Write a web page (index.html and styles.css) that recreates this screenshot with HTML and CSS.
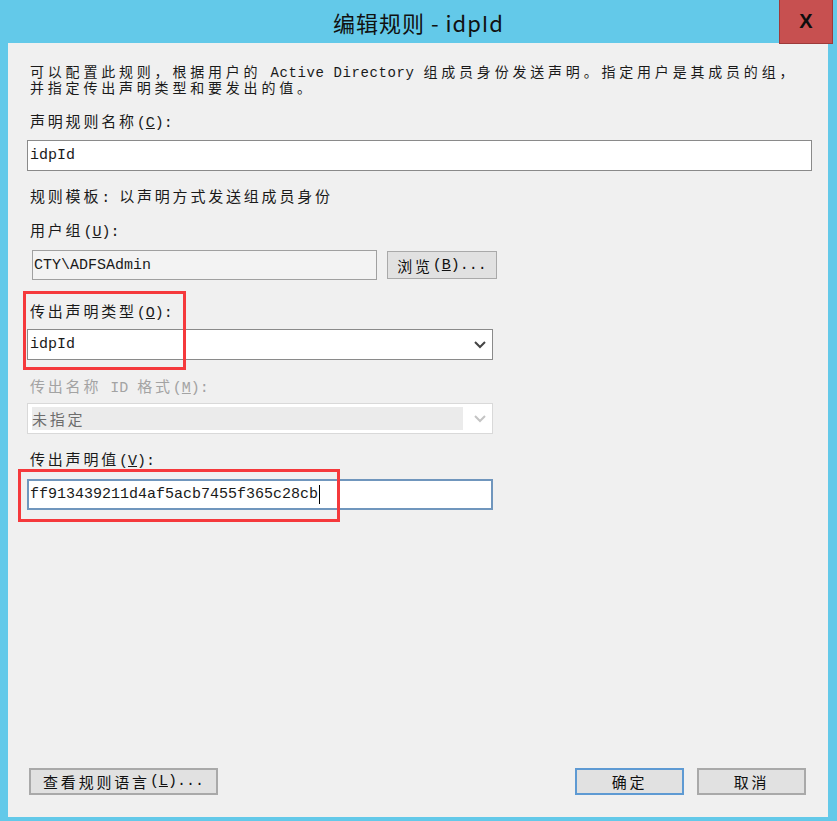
FILE: index.html
```html
<!DOCTYPE html>
<html lang="zh-CN">
<head>
  <meta charset="UTF-8">
  <meta name="viewport" content="width=device-width, initial-scale=1.0">
  <title>编辑规则 - idpId</title>
  <link rel="stylesheet" href="styles.css">
</head>
<body>

<div class="window">
  <div class="titlebar">
    <div class="title">编辑规则 - idpId</div>
    <div class="close">X</div>
  </div>

  <div class="client">
    <p class="intro">可以配置此规则，根据用户的<span class="en"> Active Directory </span>组成员身份发送声明。指定用户是其成员的组，<br>并指定传出声明类型和要发出的值。</p>

    <div class="label label-first">声明规则名称<span class="en">(<u>C</u>):</span></div>
    <div class="textbox wide"><span class="en">idpId</span></div>

    <div class="label label-template">规则模板<span class="en">: </span>以声明方式发送组成员身份</div>

    <div class="label label-group">用户组<span class="en">(<u>U</u>):</span></div>
    <div class="row">
      <div class="textbox readonly"><span class="en">CTY\ADFSAdmin</span></div>
      <div class="button browse">浏览<span class="en">(<u>B</u>)...</span></div>
    </div>

    <div class="marked marked-type">
      <div class="label">传出声明类型<span class="en">(<u>O</u>):</span></div>
      <div class="select">
        <span class="en">idpId</span>
        <svg class="chevron" width="12" height="8" viewBox="0 0 12 8"><polyline points="1,1 6,6 11,1" fill="none" stroke="#444" stroke-width="2"/></svg>
      </div>
      <div class="redbox"></div>
    </div>

    <div class="label label-disabled">传出名称<span class="en"> ID </span>格式<span class="en">(<u>M</u>):</span></div>
    <div class="select disabled">
      <span class="select-value">未指定</span>
      <svg class="chevron" width="12" height="8" viewBox="0 0 12 8"><polyline points="1,1 6,6 11,1" fill="none" stroke="#c4c4c4" stroke-width="2"/></svg>
    </div>

    <div class="marked marked-value">
      <div class="label">传出声明值<span class="en">(<u>V</u>):</span></div>
      <div class="textbox focused"><span class="en">ff913439211d4af5acb7455f365c28cb</span><span class="caret"></span></div>
      <div class="redbox"></div>
    </div>

    <div class="footer">
      <div class="button rules">查看规则语言<span class="en">(<u>L</u>)...</span></div>
      <div class="footer-right">
        <div class="button default">确定</div>
        <div class="button">取消</div>
      </div>
    </div>
  </div>
</div>

</body>
</html>
```

FILE: styles.css
```css
/* Basic reset */
*, *::before, *::after {
  box-sizing: border-box;
}

html, body {
  margin: 0;
  padding: 0;
}

body {
  background: #63c9e9;
  font-family: "Noto Sans CJK SC", sans-serif;
  color: #1a1a1a;
}

/* Window frame */
.window {
  width: 837px;
  height: 821px;
  display: flex;
  flex-direction: column;
}

.titlebar {
  height: 43px;
  display: grid;
  grid-template-columns: 1fr auto 1fr;
  align-items: start;
}

.title {
  grid-column: 2;
  font-size: 22px;
  line-height: 44px;
  letter-spacing: 1px;
  color: #111;
}

.close {
  grid-column: 3;
  justify-self: end;
  position: relative;
  z-index: 1;
  width: 54px;
  height: 44px;
  margin-right: 4px;
  background: #c75050;
  border: 1px solid #9e3a3a;
  border-top: none;
  display: flex;
  align-items: center;
  justify-content: center;
  font: bold 20px "Liberation Sans", sans-serif;
  color: #0d0d0d;
}

/* Dialog body */
.client {
  flex: 1;
  margin: 0 9px 4px 8px;
  padding: 21px 16px 22px 19px;
  background: #f0f0f0;
  display: flex;
  flex-direction: column;
  font-size: 15px;
  letter-spacing: 2.8px;
}

.en {
  font-family: "Liberation Mono", monospace;
  letter-spacing: 0;
}

.intro {
  margin: 0 0 0 3px;
  font-size: 14px;
  line-height: 14px;
  letter-spacing: 3.8px;
  white-space: nowrap;
}

.intro .en {
  letter-spacing: 0.6px;
}

.label {
  margin-left: 3px;
  height: 16px;
  line-height: 16px;
  white-space: nowrap;
}

.label-first { margin-top: 19px; }
.label-template { margin-top: 17px; }
.label-group { margin-top: 18px; }
.label-disabled { margin-top: 18px; color: #a3a3a3; }

/* Text boxes */
.textbox {
  height: 30px;
  margin-top: 11px;
  padding-left: 2px;
  background: #fff;
  border: 1px solid #8a8a8a;
  display: flex;
  align-items: center;
}

.textbox.wide {
  height: 31px;
}

.row {
  display: flex;
  align-items: center;
  gap: 10px;
  margin-top: 12px;
  padding-left: 5px;
}

.row .textbox {
  margin-top: 0;
  width: 345px;
  padding-left: 1px;
}

.textbox.readonly {
  background: #f3f3f3;
  border-color: #a0a0a0;
}

.textbox.focused {
  width: 466px;
  height: 31px;
  margin-top: 12px;
  border: 2px solid #7096bd;
  padding-left: 1px;
}

.caret {
  width: 1px;
  height: 19px;
  margin-left: 1px;
  background: #000;
}

/* Combo boxes */
.select {
  width: 466px;
  height: 31px;
  margin-top: 10px;
  padding: 0 6px 0 2px;
  background: #fff;
  border: 1px solid #8a8a8a;
  display: flex;
  align-items: center;
  justify-content: space-between;
}

.select.disabled {
  margin-top: 9px;
  padding: 3px 6px 3px 4px;
  border-color: #d9d9d9;
  align-items: stretch;
}

.select-value {
  width: 431px;
  background: #ebebeb;
  color: #6d6d6d;
  display: flex;
  align-items: center;
}

.chevron {
  align-self: center;
  flex-shrink: 0;
}

/* Red annotation boxes */
.marked {
  position: relative;
}

.marked-type {
  margin-top: 23px;
}

.marked-value {
  margin-top: 17px;
}

.redbox {
  position: absolute;
  border: 3px solid #f5393c;
  pointer-events: none;
}

.marked-type .redbox {
  left: -4px;
  top: -12px;
  width: 163px;
  height: 79px;
}

.marked-value .redbox {
  left: -9px;
  top: 18px;
  width: 322px;
  height: 53px;
}

/* Buttons */
.button {
  height: 28px;
  background: #e1e1e1;
  border: 1px solid #a9a9a9;
  display: flex;
  align-items: center;
  justify-content: center;
  white-space: nowrap;
  color: #111;
}

.browse {
  width: 110px;
}

.footer {
  margin-top: auto;
  display: flex;
  justify-content: space-between;
  align-items: center;
  padding: 0 6px 0 2px;
}

.footer .button {
  width: 109px;
  height: 27px;
  border-width: 2px;
}

.footer .rules {
  width: 189px;
}

.footer-right {
  display: flex;
  gap: 13px;
}

.button.default {
  border-color: #5e9ad3;
}
```
